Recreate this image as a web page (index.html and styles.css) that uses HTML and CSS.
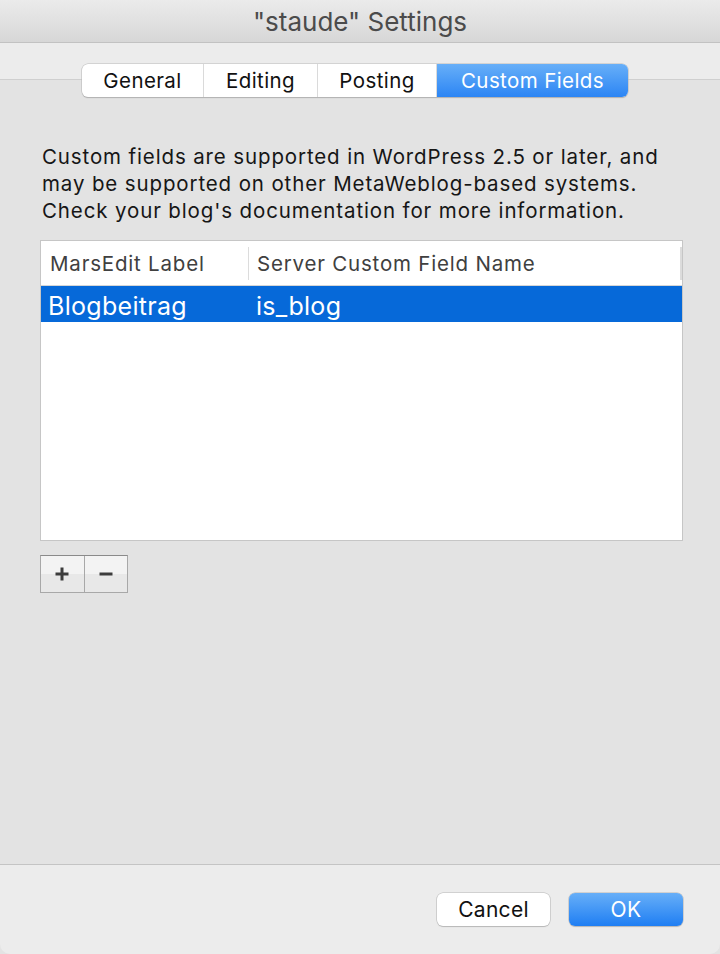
FILE: index.html
```html
<!DOCTYPE html>
<html>
<head>
<meta charset="utf-8">
<link rel="stylesheet" href="styles.css">
</head>
<body>
<div class="window">
  <div class="titlebar">"staude" Settings</div>
  <div class="toolbar">
    <div class="tabs">
      <div class="tab t-general">General</div>
      <div class="tab t-editing">Editing</div>
      <div class="tab t-posting">Posting</div>
      <div class="tab t-custom active">Custom Fields</div>
    </div>
  </div>
  <div class="content">
    <p class="desc">Custom fields are supported in WordPress 2.5 or later, and<br>may be supported on other MetaWeblog-based systems.<br>Check your blog's documentation for more information.</p>
    <div class="table">
      <div class="thead">
        <div class="th col1">MarsEdit Label</div>
        <div class="th col2">Server Custom Field Name</div>
      </div>
      <div class="row selected">
        <div class="td col1">Blogbeitrag</div>
        <div class="td col2">is_blog</div>
      </div>
    </div>
    <div class="addremove">
      <div class="ar-btn">
        <svg width="16" height="16" viewBox="0 0 16 16"><path d="M8 1.5v13M1.5 8h13" stroke="#3c3c3c" stroke-width="3" fill="none"/></svg>
      </div>
      <div class="ar-btn">
        <svg width="16" height="16" viewBox="0 0 16 16"><path d="M1.5 8h13" stroke="#3c3c3c" stroke-width="3" fill="none"/></svg>
      </div>
    </div>
  </div>
  <div class="footer">
    <div class="btn">Cancel</div>
    <div class="btn primary">OK</div>
  </div>
</div>
</body>
</html>
```
FILE: styles.css
```css
html, body {
  margin: 0;
  padding: 0;
  background: #e3e3e3;
}
body {
  font-family: Inter, "Noto Sans", "Liberation Sans", sans-serif;
  width: 720px;
  height: 954px;
  overflow: hidden;
}
.window {
  width: 720px;
  height: 954px;
  display: flex;
  flex-direction: column;
  background: #e3e3e3;
  border-radius: 0 0 10px 10px;
  overflow: hidden;
}
.titlebar {
  height: 43px;
  flex: none;
  box-sizing: border-box;
  border-bottom: 1px solid #c2c2c2;
  background: linear-gradient(#ebebeb, #d7d7d7);
  color: #4b4b4b;
  font-size: 26px;
  text-align: center;
  line-height: 42px;
  padding-top: 1px;
}
.toolbar {
  height: 37px;
  flex: none;
  background: #ececec;
  box-sizing: border-box;
  border-bottom: 1px solid #cfcfcf;
  position: relative;
}
.tabs {
  position: absolute;
  left: 82px;
  top: 21px;
  display: flex;
  height: 33px;
  border-radius: 6px;
  background: #fff;
  box-shadow: 0 0 0 0.5px #b9b9b9, 0 1px 1px rgba(0,0,0,0.25);
  overflow: hidden;
}
.tab {
  font-size: 20.5px;
  letter-spacing: 0.4px;
  color: #111;
  line-height: 33px;
  text-align: center;
  border-right: 1px solid #dadada;
  box-sizing: border-box;
}
.t-general { width: 122px; }
.t-editing { width: 114px; }
.t-posting { width: 119px; }
.t-custom { width: 191px; border-right: none; }
.tab.active {
  background: linear-gradient(#67aff8, #2c85f4);
  color: #fff;
}
.content {
  flex: 1;
  padding: 63px 37px 0 40px;
  display: flex;
  flex-direction: column;
}
.desc {
  margin: 0 0 16px 2px;
  font-size: 20.5px;
  letter-spacing: 0.87px;
  line-height: 27px;
  color: #161616;
  white-space: nowrap;
}
.table {
  height: 301px;
  background: #fff;
  border: 1px solid #c6c6c6;
  box-sizing: border-box;
}
.thead {
  height: 45px;
  display: flex;
  align-items: center;
  border-bottom: 1px solid #d6d6d6;
  box-sizing: border-box;
}
.th {
  font-size: 20.5px;
  letter-spacing: 0.8px;
  color: #404040;
  height: 33px;
  line-height: 33px;
  box-sizing: border-box;
}
.th.col1 {
  width: 208px;
  padding-left: 9px;
  border-right: 1px solid #dcdcdc;
}
.th.col2 {
  flex: 1;
  padding-left: 8px;
  border-right: 2px solid #dcdcdc;
}
.row {
  height: 36px;
  display: flex;
  align-items: center;
}
.row.selected {
  background: #0669d9;
  color: #fff;
}
.td {
  font-size: 25px;
  letter-spacing: 0.3px;
  box-sizing: border-box;
  padding-top: 4px;
}
.td.col1 {
  width: 208px;
  padding-left: 7px;
}
.td.col2 {
  padding-left: 7px;
}
.addremove {
  margin-top: 14px;
  display: flex;
  width: 88px;
  height: 38px;
  box-sizing: border-box;
  border: 1px solid #a8a8a8;
  border-top-color: #8a8a8a;
  background: linear-gradient(#f3f3f3 0, #f3f3f3 50%, #e8e8e8 50%, #e8e8e8 100%);
}
.ar-btn {
  flex: 1;
  display: flex;
  align-items: center;
  justify-content: center;
}
.ar-btn:first-child {
  border-right: 1px solid #a8a8a8;
}
.footer {
  height: 90px;
  flex: none;
  background: #ececec;
  border-top: 1px solid #c4c4c4;
  box-sizing: border-box;
  display: flex;
  justify-content: flex-end;
  align-items: flex-start;
  gap: 19px;
  padding: 28px 37px 0 0;
}
.btn {
  width: 113px;
  height: 33px;
  box-sizing: border-box;
  border-radius: 6px;
  background: #fff;
  box-shadow: 0 0 0 0.5px #b5b5b5, 0 1px 1px rgba(0,0,0,0.2);
  font-size: 21px;
  letter-spacing: 0.3px;
  color: #111;
  text-align: center;
  line-height: 33px;
}
.btn.primary {
  width: 114px;
  background: linear-gradient(#67aff8, #1f7ef3);
  color: #fff;
}
```
